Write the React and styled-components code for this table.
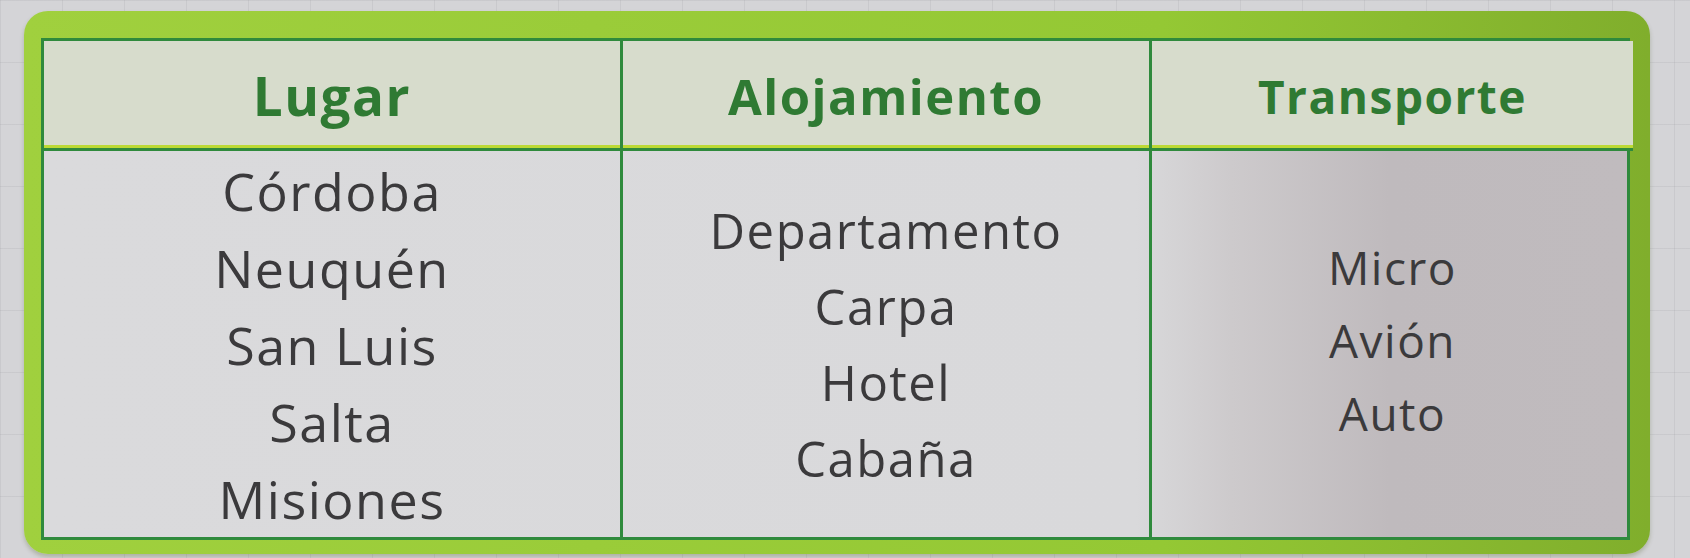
import React from "react";
import styled, { createGlobalStyle } from "styled-components";

const GlobalStyle = createGlobalStyle`
  html, body {
    margin: 0;
    padding: 0;
  }
  body {
    width: 1690px;
    height: 558px;
    overflow: hidden;
    background-color: #d4d4d7;
    background-image:
      linear-gradient(to right, rgba(150, 150, 160, 0.18) 1px, transparent 1px),
      linear-gradient(to bottom, rgba(150, 150, 160, 0.18) 1px, transparent 1px);
    background-size: 62px 62px;
    font-family: "Open Sans", "Noto Sans", sans-serif;
  }
`;

const Frame = styled.div`
  margin: 11px 0 0 24px;
  width: 1626px;
  box-sizing: border-box;
  padding: 27px 20px 14px 17px;
  background: linear-gradient(to right, #a0d03e, #94c834 70%, #80ae2c);
  border-radius: 24px;
  box-shadow: 0 3px 4px rgba(60, 80, 20, 0.25);
`;

const Table = styled.div`
  display: grid;
  grid-template-columns: 576px 529px 484px;
  grid-template-rows: 110px 386px;
  border: 3px solid #2f8a3c;
  box-sizing: border-box;
  background: linear-gradient(
    to right,
    #dadadc 0%,
    #d9d9db 69%,
    #cdcacc 75%,
    #bfbabd 85%,
    #c0bbbe 100%
  );
`;

const HeadCell = styled.div`
  display: flex;
  align-items: center;
  justify-content: center;
  background: #d7dccc;
  border-bottom: 3px solid #2f8a3c;
  box-shadow: inset 0 -3px 0 #bcd934;
  border-left: ${(p) => (p.$first ? "none" : "3px solid #2f8a3c")};
  color: #2f7a33;
  font-size: ${(p) => p.$size}px;
  font-weight: 700;
  letter-spacing: 1.5px;
  padding-top: 2px;
  box-sizing: border-box;
`;

const BodyCell = styled.div`
  display: flex;
  flex-direction: column;
  align-items: center;
  justify-content: center;
  border-left: ${(p) => (p.$first ? "none" : "3px solid #2f8a3c")};
  padding-bottom: ${(p) => p.$shift || 0}px;
  box-sizing: border-box;
`;

const Item = styled.div`
  font-size: ${(p) => p.$size}px;
  line-height: ${(p) => p.$lh}px;
  color: #3b3a3c;
  letter-spacing: 1.5px;
`;

const columns = [
  {
    title: "Lugar",
    items: ["Córdoba", "Neuquén", "San Luis", "Salta", "Misiones"],
    lh: 77,
    head: 53,
    size: 52,
    shift: 0,
  },
  {
    title: "Alojamiento",
    items: ["Departamento", "Carpa", "Hotel", "Cabaña"],
    lh: 76,
    head: 49,
    size: 49,
    shift: 0,
  },
  {
    title: "Transporte",
    items: ["Micro", "Avión", "Auto"],
    lh: 73,
    head: 46,
    size: 46,
    shift: 8,
  },
];

export default function App() {
  return (
    <>
      <GlobalStyle />
      <Frame>
        <Table>
          {columns.map((c, i) => (
            <HeadCell key={c.title} $first={i === 0} $size={c.head}>
              {c.title}
            </HeadCell>
          ))}
          {columns.map((c, i) => (
            <BodyCell key={c.title} $first={i === 0} $shift={c.shift}>
              {c.items.map((it) => (
                <Item key={it} $lh={c.lh} $size={c.size}>
                  {it}
                </Item>
              ))}
            </BodyCell>
          ))}
        </Table>
      </Frame>
    </>
  );
}
